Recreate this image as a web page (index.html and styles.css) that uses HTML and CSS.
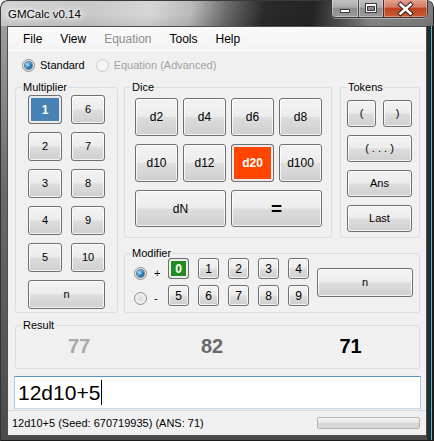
FILE: index.html
```html
<!DOCTYPE html>
<html>
<head>
<meta charset="utf-8">
<title>GMCalc v0.14</title>
<link rel="stylesheet" href="styles.css">
</head>
<body>
<div class="window">
  <div class="titlebar">
    <span class="title">GMCalc v0.14</span>
    <div class="caption-btns">
      <span class="cap min"><svg width="26" height="17" viewBox="0 0 26 17"><rect x="8.5" y="9.5" width="9" height="3" fill="#fff" stroke="#3c3c3c" stroke-width="1"/></svg></span>
      <span class="cap max"><svg width="24" height="17" viewBox="0 0 24 17"><rect x="6.5" y="3.5" width="11" height="9" fill="#fff" stroke="#3c3c3c" stroke-width="1"/><rect x="8.5" y="6.5" width="7" height="4" fill="#8a8a8a" stroke="#3c3c3c" stroke-width="1"/></svg></span>
      <span class="cap close"><svg width="43" height="17" viewBox="0 0 43 17"><path d="M16.5 4.5 L26.5 13.5 M26.5 4.5 L16.5 13.5" stroke="#3a2520" stroke-width="4.6" stroke-linecap="square"/><path d="M16.5 4.5 L26.5 13.5 M26.5 4.5 L16.5 13.5" stroke="#fff" stroke-width="2.6" stroke-linecap="square"/></svg></span>
    </div>
  </div>
  <div class="frame">
    <div class="client">
      <nav class="menubar">
        <span class="menu-item">File</span>
        <span class="menu-item">View</span>
        <span class="menu-item disabled">Equation</span>
        <span class="menu-item">Tools</span>
        <span class="menu-item">Help</span>
      </nav>
      <div class="modes">
        <label class="opt"><span class="radio checked"></span>Standard</label>
        <label class="opt disabled"><span class="radio off"></span>Equation (Advanced)</label>
      </div>
      <div class="main">
        <fieldset class="group multiplier">
          <legend>Multiplier</legend>
          <div class="mult-grid">
            <button class="btn sel sel-blue">1</button><button class="btn">6</button>
            <button class="btn">2</button><button class="btn">7</button>
            <button class="btn">3</button><button class="btn">8</button>
            <button class="btn">4</button><button class="btn">9</button>
            <button class="btn">5</button><button class="btn">10</button>
            <button class="btn span2">n</button>
          </div>
        </fieldset>
        <div class="right">
          <div class="top-row">
            <fieldset class="group dice">
              <legend>Dice</legend>
              <div class="dice-grid">
                <button class="btn big">d2</button><button class="btn big">d4</button><button class="btn big">d6</button><button class="btn big">d8</button>
                <button class="btn big">d10</button><button class="btn big">d12</button><button class="btn sel sel-red">d20</button><button class="btn big">d100</button>
                <button class="btn big span2">dN</button><button class="btn span2 eq">=</button>
              </div>
            </fieldset>
            <fieldset class="group tokens">
              <legend>Tokens</legend>
              <div class="tok-grid">
                <button class="btn">(</button><button class="btn">)</button>
                <button class="btn span2">( . . . )</button>
                <button class="btn span2">Ans</button>
                <button class="btn span2">Last</button>
              </div>
            </fieldset>
          </div>
          <fieldset class="group modifier">
            <legend>Modifier</legend>
            <div class="mod-body">
              <div class="signs">
                <label class="sign"><span class="radio checked"></span>+</label>
                <label class="sign"><span class="radio"></span>-</label>
              </div>
              <div class="digits">
                <button class="btn sel sel-green">0</button><button class="btn">1</button><button class="btn">2</button><button class="btn">3</button><button class="btn">4</button>
                <button class="btn">5</button><button class="btn">6</button><button class="btn">7</button><button class="btn">8</button><button class="btn">9</button>
              </div>
              <button class="btn mod-n">n</button>
            </div>
          </fieldset>
        </div>
      </div>
      <fieldset class="group result">
        <legend>Result</legend>
        <div class="results">
          <span class="r old">77</span>
          <span class="r mid">82</span>
          <span class="r cur">71</span>
        </div>
      </fieldset>
      <div class="input">12d10+5<span class="caret"></span></div>
      <div class="status">
        <span class="status-text">12d10+5 (Seed: 670719935) (ANS: 71)</span>
        <span class="progress"></span>
      </div>
    </div>
  </div>
</div>
</body>
</html>
```
FILE: styles.css
```css
* { box-sizing: border-box; }
html, body { margin: 0; padding: 0; background: #fff; }

.window {
  width: 434px;
  height: 441px;
  display: flex;
  flex-direction: column;
  font-family: "Liberation Sans", Arial, sans-serif;
  border-radius: 7px 7px 0 0;
  overflow: hidden;
}

/* ---------- glass title bar ---------- */
.titlebar {
  height: 26px;
  flex: none;
  display: flex;
  justify-content: space-between;
  align-items: flex-start;
  padding: 0 6px 0 8px;
  background:
    linear-gradient(to bottom, rgba(0,0,0,0) 55%, rgba(0,0,0,0.08) 100%),
    linear-gradient(100deg, #d3d3d3 0px, #c9c9c9 90px, #d6d6d6 150px, #b9b9b9 190px, #6b6b6b 225px, #2a2a2a 262px, #242424 310px, #4c4c4c 335px, #8a8a8a 370px, #7c7c7c 434px);
  box-shadow: inset 1px 1px 0 #3a3a3a, inset -1px 0 0 #1f1f1f;
  border-radius: 7px 7px 0 0;
}
.title {
  margin-top: 7px;
  font-size: 11.5px;
  line-height: 14px;
  color: #000;
  text-shadow: 0 0 6px #fff, 0 0 3px #fff, 0 0 8px rgba(255,255,255,0.9);
}
.caption-btns {
  display: flex;
  height: 19px;
  margin-top: -1px;
  border: 1px solid #3d3d3d;
  border-top: 0;
  border-radius: 0 0 5px 5px;
  overflow: hidden;
  box-shadow: 0 1px 0 rgba(255,255,255,0.35);
}
.cap {
  display: flex;
  align-items: flex-end;
  justify-content: center;
  height: 18px;
}
.cap svg { display: block; }
.cap.min, .cap.max {
  background: linear-gradient(to bottom, #c4c4c4 0%, #acacac 45%, #8e8e8e 52%, #9a9a9a 100%);
  box-shadow: inset 0 0 0 1px rgba(255,255,255,0.35);
}
.cap.min { width: 26px; }
.cap.max { width: 25px; border-left: 1px solid #4a4a4a; }
.cap.close {
  width: 44px;
  border-left: 1px solid #4a2a22;
  background: linear-gradient(to bottom, #e3a796 0%, #d47a62 45%, #c0421f 52%, #cc5a38 100%);
  box-shadow: inset 0 0 0 1px rgba(255,220,210,0.4);
}

/* ---------- frame around client ---------- */
.frame {
  flex: 1;
  padding: 0 7px 5px 7px;
  background:
    linear-gradient(to right, rgba(0,0,0,0) 0px, rgba(0,0,0,0) 427px, #2a2a2a 427px, #2a2a2a 431px, #3cc2ea 431px, #3cc2ea 432px, #1b1b1b 432px),
    linear-gradient(to bottom, #9e9e9e 0%, #6a6a6a 40%, #4a4a4a 100%);
  box-shadow: inset 1px 0 0 #333, inset 0 -1px 0 #1d1d1d;
}
.client {
  height: 410px;
  border: 1px solid #4f4f4f;
  background: #f0f0f0;
  display: flex;
  flex-direction: column;
}

/* ---------- menu ---------- */
.menubar {
  height: 24px;
  flex: none;
  display: flex;
  padding-left: 6px;
  background: linear-gradient(to bottom, #fafafa, #f3f3f3);
  box-shadow: inset 0 -1px 0 #ffffff;
}
.menu-item {
  padding: 0 9px;
  font-size: 12px;
  line-height: 24px;
  color: #000;
}
.menu-item.disabled { color: #8d8d8d; }

/* ---------- radio options ---------- */
.modes {
  display: flex;
  gap: 11px;
  padding: 8px 0 0 14px;
  height: 21px;
  flex: none;
}
.opt, .sign {
  display: flex;
  align-items: center;
  font-size: 11px;
  line-height: 13px;
  color: #000;
}
.opt.disabled { color: #a2a2a2; }
.radio {
  position: relative;
  width: 13px;
  height: 13px;
  border-radius: 50%;
  border: 1px solid #8a8c8e;
  background: radial-gradient(circle at 50% 50%, #dcdcdc 0%, #e9e9e9 45%, #f8f8f8 100%);
  margin-right: 5px;
  flex: none;
  display: flex;
  align-items: center;
  justify-content: center;
}
.radio.checked::after {
  content: "";
  width: 7px;
  height: 7px;
  border-radius: 50%;
  background: radial-gradient(circle at 35% 35%, #b9ecff 0%, #4aa3d8 35%, #1b5e96 70%, #0d2f55 100%);
  box-shadow: 0 0 0 1px rgba(20,50,80,0.6);
}
.radio.off {
  border-color: #c9c9c9;
  background: #f4f4f4;
}

/* ---------- groups ---------- */
.group {
  margin: 0;
  padding: 0;
  border: 1px solid #d5dfe5;
  border-radius: 3px;
  min-width: 0;
}
.group legend {
  font-size: 11px;
  line-height: 13px;
  padding: 0 1px;
  margin-left: 6px;
  color: #000;
}

.main {
  display: flex;
  gap: 6px;
  padding: 9px 0 0 7px;
  flex: none;
}

/* ---------- buttons ---------- */
.btn {
  -webkit-appearance: none;
  appearance: none;
  margin: 0;
  padding: 0;
  border: 1px solid #707070;
  border-radius: 3px;
  background: linear-gradient(to bottom, #f3f3f3 0%, #ececec 48%, #dddddd 52%, #cfcfcf 100%);
  box-shadow: inset 0 0 0 1px rgba(255,255,255,0.75);
  font-family: "Liberation Sans", Arial, sans-serif;
  font-size: 11px;
  line-height: 1;
  color: #000;
  display: flex;
  align-items: center;
  justify-content: center;
}
.btn.big { font-size: 12px; }
.btn.eq { font-size: 19px; font-weight: bold; }
.btn.span2 { grid-column: span 2; }
.btn.sel {
  color: #fff;
  font-weight: bold;
  font-size: 12px;
  box-shadow: inset 0 0 0 2px #ececec;
}
.btn.sel-blue { background: #4682b4; }
.btn.sel-red { background: #ff4500; }
.btn.sel-green { background: #228b22; font-size: 13px; }

/* multiplier */
.multiplier { width: 103px; height: 232px; }
.mult-grid {
  display: grid;
  grid-template-columns: 34px 34px;
  grid-auto-rows: 29px;
  column-gap: 9px;
  row-gap: 8px;
  padding: 1px 0 0 12px;
}

/* right column */
.right { width: 296px; display: flex; flex-direction: column; }
.top-row { display: flex; gap: 8px; height: 157px; }

.dice { width: 208px; height: 157px; }
.dice-grid {
  display: grid;
  grid-template-columns: repeat(4, 43px);
  grid-template-rows: 38px 38px 37px;
  column-gap: 5px;
  row-gap: 8px;
  padding: 4px 0 0 10px;
}

.tokens { width: 80px; height: 157px; }
.tok-grid {
  display: grid;
  grid-template-columns: 29px 29px;
  grid-auto-rows: 27px;
  column-gap: 7px;
  row-gap: 8px;
  padding: 6px 0 0 6px;
}

.modifier { height: 66px; margin-top: 9px; }
.mod-body {
  display: flex;
  align-items: flex-start;
  margin-top: -2px;
  padding-left: 9px;
}
.signs {
  width: 34px;
  display: flex;
  flex-direction: column;
  gap: 12px;
  padding-top: 9px;
}
.sign .radio { margin-right: 7px; }
.digits {
  display: grid;
  grid-template-columns: repeat(5, 21px);
  grid-auto-rows: 21px;
  column-gap: 9px;
  row-gap: 6px;
}
.digits .btn { font-size: 12px; }
.mod-n { width: 96px; height: 29px; margin: 10px 0 0 8px; }

/* result */
.result { margin: 6px 6px 0 7px; height: 50px; flex: none; }
.results {
  display: grid;
  grid-template-columns: 126px 140px 1fr;
  padding-top: 2px;
  font-size: 20px;
  line-height: 24px;
  font-weight: bold;
  text-align: center;
}
.r.old { color: #a9a9a9; }
.r.mid { color: #696969; }
.r.cur { color: #000; }

/* input */
.input {
  margin: 7px 5px 0 6px;
  height: 33px;
  flex: none;
  border: 1px solid;
  border-color: #5b90c2 #a9c9e4 #c6dbee #a9c9e4;
  background: #fff;
  padding-left: 3px;
  display: flex;
  align-items: center;
  font-size: 21px;
  color: #000;
}
.caret {
  display: inline-block;
  width: 1px;
  height: 25px;
  background: #000;
  margin-left: 1px;
}

/* status bar */
.status {
  margin-top: 1px;
  height: 25px;
  flex: none;
  display: flex;
  align-items: center;
  justify-content: space-between;
  padding: 0 6px 0 4px;
  font-size: 11px;
  color: #000;
  box-shadow: inset 0 1px 0 #dadada;
}
.progress {
  width: 103px;
  height: 12px;
  border: 1px solid #b4b4b4;
  border-radius: 2px;
  background: linear-gradient(to bottom, #f5f5f5 0%, #e6e6e6 45%, #d4d4d4 55%, #dadada 100%);
}
```
